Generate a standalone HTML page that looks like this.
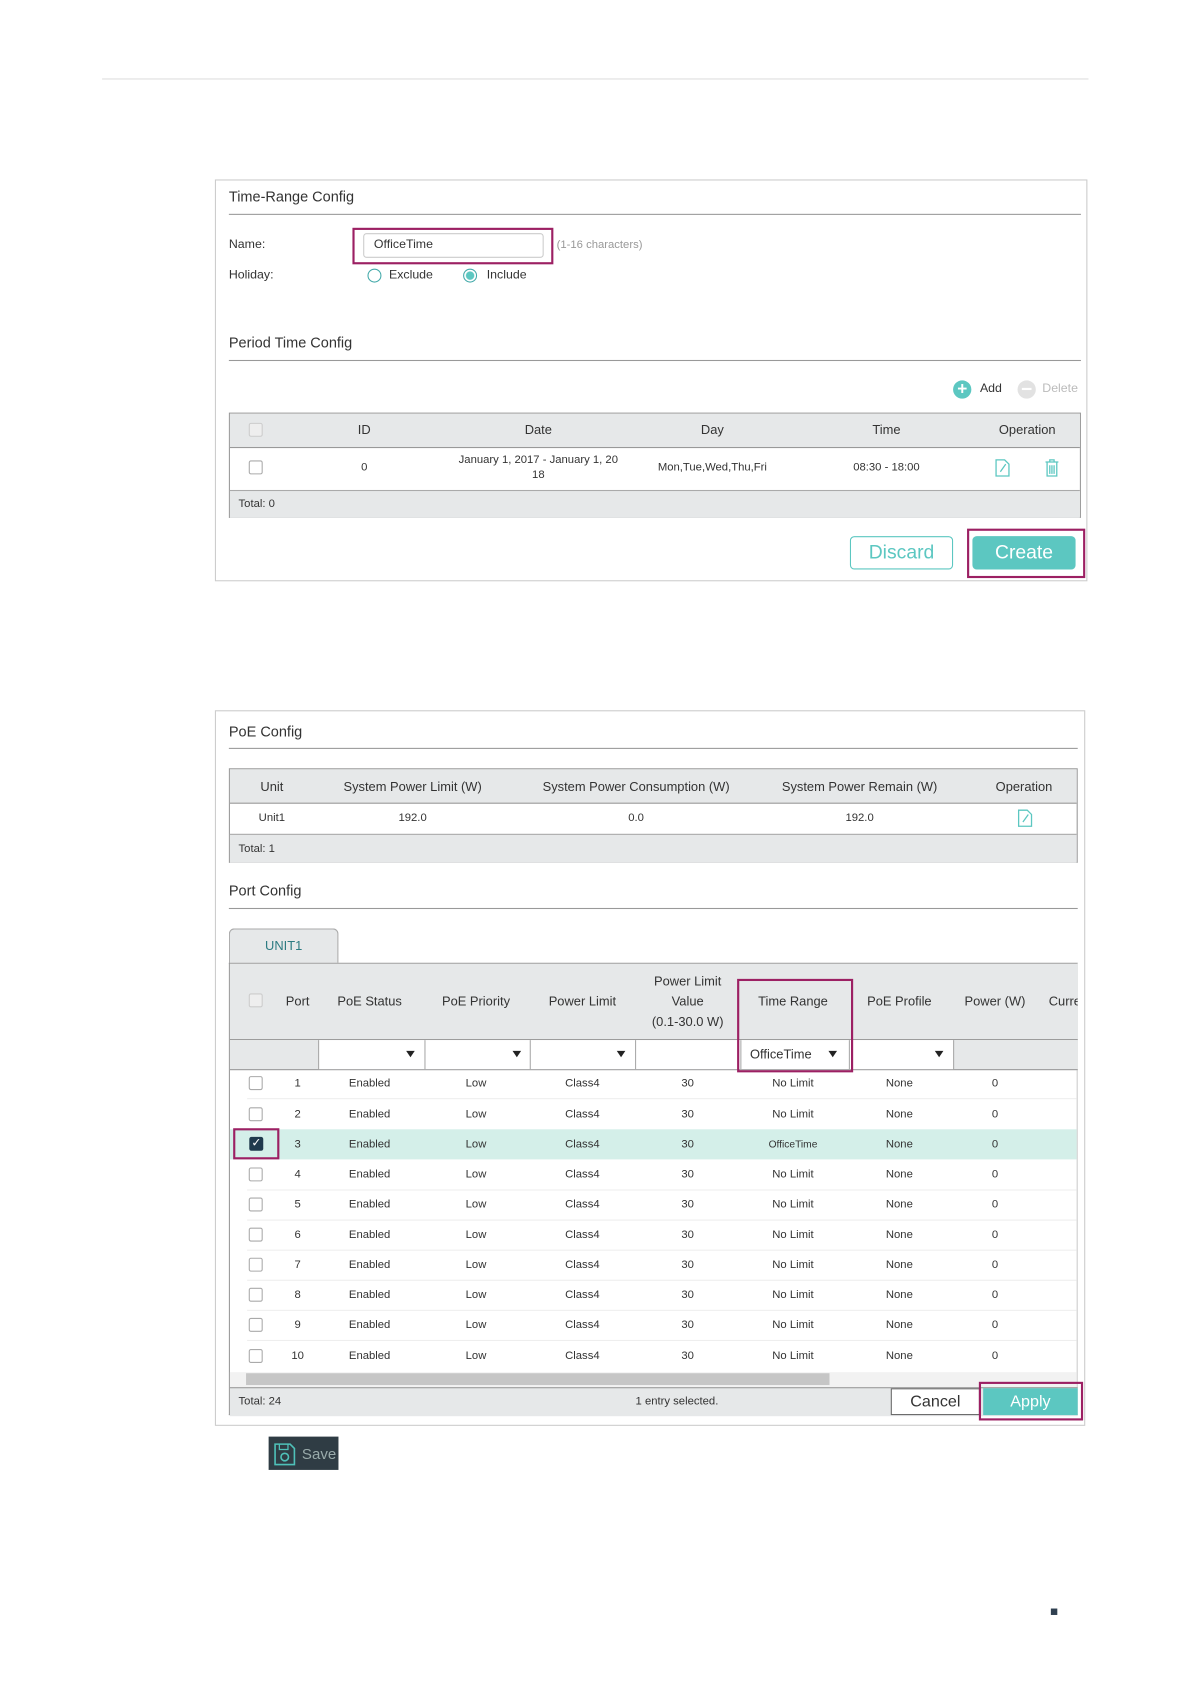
<!DOCTYPE html>
<html><head><meta charset="utf-8">
<style>
html,body{margin:0;padding:0;background:#fff;width:1191px;height:1684px;overflow:hidden}
#w{position:absolute;left:0;top:0;width:1110px;height:1570px;transform:scale(1.0745);transform-origin:0 0;font-family:"Liberation Sans",sans-serif;color:#333}
.a{position:absolute}
.t{position:absolute;white-space:nowrap;transform:translate(-50%,-50%);font-size:10.5px;color:#333}
.l{position:absolute;white-space:nowrap;transform:translateY(-50%);font-size:11.5px;color:#333}
.cb{position:absolute;width:11px;height:11px;border:1px solid #aaa;border-radius:2px;background:#fff;transform:translate(-50%,-50%)}
.mag{position:absolute;border:2px solid #9c2063;box-sizing:border-box}
.arr{position:absolute;width:0;height:0;border-left:4px solid transparent;border-right:4px solid transparent;border-top:6px solid #222}
</style></head><body><div id="w">
<div class="a" style="left:95px;top:73px;width:918px;height:1px;background:#ddd"></div>

<!-- Panel 1 -->
<div class="a" style="left:200px;top:167px;width:812px;height:374px;border:1px solid #ccc;box-sizing:border-box"></div>
<div class="l" style="left:213px;top:183px;font-size:13.5px">Time-Range Config</div>
<div class="a" style="left:213px;top:199px;width:793px;height:1px;background:#999"></div>
<div class="l" style="left:213px;top:228px">Name:</div>
<div class="a" style="left:338px;top:217px;width:168px;height:23px;border:1px solid #ccc;border-radius:3px;box-sizing:border-box"></div>
<div class="l" style="left:348px;top:228px">OfficeTime</div>
<div class="mag" style="left:328px;top:212px;width:187px;height:34px"></div>
<div class="l" style="left:518px;top:228px;color:#999;font-size:10.5px">(1-16 characters)</div>
<div class="l" style="left:213px;top:256px">Holiday:</div>
<div class="a" style="left:342px;top:250px;width:11px;height:11px;border:1px solid #4aa;border-radius:50%"></div>
<div class="l" style="left:362px;top:256px">Exclude</div>
<div class="a" style="left:431px;top:250px;width:11px;height:11px;border:1px solid #4aa;border-radius:50%;background:radial-gradient(#5cc7c1 45%,#fff 55%)"></div>
<div class="l" style="left:453px;top:256px">Include</div>
<div class="l" style="left:213px;top:319px;font-size:13.5px">Period Time Config</div>
<div class="a" style="left:213px;top:335px;width:793px;height:1px;background:#999"></div>
<div class="a" style="left:887px;top:354px;width:17px;height:17px;border-radius:50%;background:#5cc7c1;color:#fff;font-size:16px;line-height:17px;text-align:center;font-weight:bold">+</div>
<div class="l" style="left:912px;top:362px">Add</div>
<div class="a" style="left:947px;top:354px;width:17px;height:17px;border-radius:50%;background:#e2e2e2"></div>
<div class="a" style="left:951px;top:361px;width:9px;height:2px;background:#fff"></div>
<div class="l" style="left:970px;top:362px;color:#bbb">Delete</div>

<div class="a" style="left:213px;top:384px;width:793px;height:98px;border:1px solid #999;box-sizing:border-box;background:#fff"></div>
<div class="a" style="left:214px;top:385px;width:791px;height:31px;background:#e6e8e9;border-bottom:1px solid #999"></div>
<div class="a" style="left:214px;top:456px;width:791px;height:25px;background:#e6e8e9;border-top:1px solid #aaa"></div>
<div class="cb" style="left:238px;top:400px;border-color:#ccc;background:#eee"></div>
<div class="t" style="left:339px;top:400px;font-size:12px">ID</div>
<div class="t" style="left:501px;top:400px;font-size:12px">Date</div>
<div class="t" style="left:663px;top:400px;font-size:12px">Day</div>
<div class="t" style="left:825px;top:400px;font-size:12px">Time</div>
<div class="t" style="left:956px;top:400px;font-size:12px">Operation</div>
<div class="cb" style="left:238px;top:435px"></div>
<div class="t" style="left:339px;top:435px">0</div>
<div class="t" style="left:501px;top:428px">January 1, 2017 - January 1, 20</div>
<div class="t" style="left:501px;top:442px">18</div>
<div class="t" style="left:663px;top:435px">Mon,Tue,Wed,Thu,Fri</div>
<div class="t" style="left:825px;top:435px">08:30 - 18:00</div>
<svg class="a" style="left:926px;top:427px" width="14" height="17" viewBox="0 0 14 17"><path d="M1 1h8l4 4v11H1z M5 12l5-7" fill="none" stroke="#5cc7c1" stroke-width="1.2"/></svg>
<svg class="a" style="left:972px;top:427px" width="14" height="17" viewBox="0 0 14 17"><path d="M1 3h12M5 3V1h4v2M2.5 3v13h9V3M5 6v8M7 6v8M9 6v8" fill="none" stroke="#5cc7c1" stroke-width="1.2"/></svg>
<div class="l" style="left:222px;top:469px;font-size:10.5px">Total: 0</div>

<div class="a" style="left:791px;top:499px;width:96px;height:31px;border:1px solid #5cc7c1;border-radius:4px;box-sizing:border-box;color:#5cc7c1;font-size:18px;line-height:29px;text-align:center">Discard</div>
<div class="a" style="left:905px;top:499px;width:96px;height:31px;background:#5cc7c1;border-radius:4px;color:#fff;font-size:18px;line-height:31px;text-align:center">Create</div>
<div class="mag" style="left:900px;top:492px;width:110px;height:46px"></div>

<!-- Panel 2 -->
<div class="a" style="left:200px;top:661px;width:810px;height:666px;border:1px solid #ccc;box-sizing:border-box"></div>
<div class="l" style="left:213px;top:681px;font-size:13.5px">PoE Config</div>
<div class="a" style="left:213px;top:696px;width:790px;height:1px;background:#999"></div>
<div class="a" style="left:213px;top:715px;width:790px;height:88px;border:1px solid #999;box-sizing:border-box;background:#fff"></div>
<div class="a" style="left:214px;top:716px;width:788px;height:31px;background:#e6e8e9;border-bottom:1px solid #999"></div>
<div class="a" style="left:214px;top:776px;width:788px;height:26px;background:#e6e8e9;border-top:1px solid #aaa"></div>
<div class="t" style="left:253px;top:732px;font-size:12px">Unit</div>
<div class="t" style="left:384px;top:732px;font-size:12px">System Power Limit (W)</div>
<div class="t" style="left:592px;top:732px;font-size:12px">System Power Consumption (W)</div>
<div class="t" style="left:800px;top:732px;font-size:12px">System Power Remain (W)</div>
<div class="t" style="left:953px;top:732px;font-size:12px">Operation</div>
<div class="t" style="left:253px;top:761px">Unit1</div>
<div class="t" style="left:384px;top:761px">192.0</div>
<div class="t" style="left:592px;top:761px">0.0</div>
<div class="t" style="left:800px;top:761px">192.0</div>
<svg class="a" style="left:947px;top:753px" width="14" height="17" viewBox="0 0 14 17"><path d="M1 1h8l4 4v11H1z M5 12l5-7" fill="none" stroke="#5cc7c1" stroke-width="1.2"/></svg>
<div class="l" style="left:222px;top:790px;font-size:10.5px">Total: 1</div>
<div class="l" style="left:213px;top:829px;font-size:13.5px">Port Config</div>
<div class="a" style="left:213px;top:845px;width:790px;height:1px;background:#999"></div>

<div class="a" style="left:213px;top:864px;width:102px;height:33px;background:#e6e8e9;border:1px solid #aaa;border-bottom:none;border-radius:5px 5px 0 0;box-sizing:border-box"></div>
<div class="t" style="left:264px;top:880px;color:#2d7b82;font-size:12px">UNIT1</div>
<div class="a" style="left:213px;top:896px;width:790px;height:421px;border:1px solid #999;border-right:1px solid #ccc;box-sizing:border-box;background:#fff"></div>
<div class="a" style="left:214px;top:897px;width:789px;height:70px;background:#e6e8e9;border-bottom:1px solid #999"></div>
<div class="a" style="left:214px;top:968px;width:789px;height:27px;background:#e6e8e9;border-bottom:1px solid #999"></div>
<div class="a" style="left:297px;top:968px;width:590px;height:27px;background:#fff"></div>
<div class="a" style="left:395px;top:968px;width:1px;height:27px;background:#aaa"></div>
<div class="a" style="left:493px;top:968px;width:1px;height:27px;background:#aaa"></div>
<div class="a" style="left:591px;top:968px;width:1px;height:27px;background:#aaa"></div>
<div class="a" style="left:689px;top:968px;width:1px;height:27px;background:#aaa"></div>
<div class="a" style="left:790px;top:968px;width:1px;height:27px;background:#aaa"></div>
<div class="a" style="left:887px;top:968px;width:1px;height:27px;background:#aaa"></div>
<div class="a" style="left:296px;top:968px;width:1px;height:27px;background:#aaa"></div>
<div class="arr" style="left:378px;top:978px"></div>
<div class="arr" style="left:477px;top:978px"></div>
<div class="arr" style="left:574px;top:978px"></div>
<div class="arr" style="left:771px;top:978px"></div>
<div class="arr" style="left:870px;top:978px"></div>
<div class="l" style="left:698px;top:981px;font-size:12px">OfficeTime</div>
<div class="mag" style="left:686px;top:911px;width:108px;height:87px"></div>

<div class="cb" style="left:238px;top:931px;border-color:#ccc;background:#eee"></div>
<div class="t" style="left:277px;top:932px;font-size:12px">Port</div>
<div class="t" style="left:344px;top:932px;font-size:12px">PoE Status</div>
<div class="t" style="left:443px;top:932px;font-size:12px">PoE Priority</div>
<div class="t" style="left:542px;top:932px;font-size:12px">Power Limit</div>
<div class="t" style="left:640px;top:913px;font-size:12px">Power Limit</div>
<div class="t" style="left:640px;top:932px;font-size:12px">Value</div>
<div class="t" style="left:640px;top:951px;font-size:12px">(0.1-30.0 W)</div>
<div class="t" style="left:738px;top:932px;font-size:12px">Time Range</div>
<div class="t" style="left:837px;top:932px;font-size:12px">PoE Profile</div>
<div class="t" style="left:926px;top:932px;font-size:12px">Power (W)</div>
<div class="l" style="left:976px;top:932px;font-size:12px;width:27px;overflow:hidden">Current</div>

<div class="a" style="left:214px;top:1051px;width:788px;height:28px;background:#d4efe9"></div>
<div id="rows"></div>

<div class="a" style="left:214px;top:1277px;width:788px;height:14px;background:#f2f2f2"></div>
<div class="a" style="left:229px;top:1278px;width:543px;height:11px;background:#c6c6c6"></div>
<div class="a" style="left:214px;top:1291px;width:789px;height:26px;background:#e6e8e9;border-top:1px solid #999"></div>
<div class="l" style="left:222px;top:1304px;font-size:10.5px">Total: 24</div>
<div class="t" style="left:630px;top:1304px">1 entry selected.</div>
<div class="a" style="left:829px;top:1292px;width:83px;height:25px;background:#fff;border:1px solid #666;box-sizing:border-box;text-align:center;line-height:23px;font-size:15px">Cancel</div>
<div class="a" style="left:915px;top:1292px;width:88px;height:25px;background:#5cc7c1;color:#fff;text-align:center;line-height:25px;font-size:15px">Apply</div>
<div class="mag" style="left:911px;top:1286px;width:97px;height:36px"></div>
<div class="mag" style="left:217px;top:1050px;width:43px;height:29px"></div>

<div class="a" style="left:250px;top:1337px;width:65px;height:31px;background:#2f3c44"></div>
<svg class="a" style="left:254px;top:1342px" width="22" height="23" viewBox="0 0 22 23"><path d="M2 2h14l4 4v15H2z" fill="none" stroke="#4fc1b9" stroke-width="1.5"/><circle cx="11" cy="14" r="3.5" fill="none" stroke="#4fc1b9" stroke-width="1.5"/><path d="M6 2v5h8V2" fill="none" stroke="#4fc1b9" stroke-width="1.2"/></svg>
<div class="l" style="left:281px;top:1353px;font-size:14px;color:#9aa">Save</div>

<div class="a" style="left:978px;top:1497px;width:6px;height:6px;background:#2f4050"></div>
</div>
<script>
var ys=[1008,1037,1065,1093,1121,1149,1177,1205,1233,1262],h='';
for(var i=0;i<10;i++){var y=ys[i];
 if(i<9&&i!=1&&i!=2)h+='<div class="a" style="left:230px;top:'+(y+14)+'px;width:772px;height:1px;background:#eee"></div>';
 if(i==2)h+='<div class="a" style="left:232px;top:'+(y-7)+'px;width:13px;height:13px;background:#1f3a4d;border-radius:2px;color:#fff;font-size:11px;line-height:13px;text-align:center">&#10003;</div>';
 else h+='<div class="cb" style="left:238px;top:'+y+'px"></div>';
 var tr=i==2?'<span style="font-size:9.5px">OfficeTime</span>':'No Limit';
 var c=[[277,i+1],[344,'Enabled'],[443,'Low'],[542,'Class4'],[640,'30'],[738,tr],[837,'None'],[926,'0']];
 for(var j=0;j<c.length;j++)h+='<div class="t" style="left:'+c[j][0]+'px;top:'+y+'px">'+c[j][1]+'</div>';}
document.getElementById('rows').outerHTML=h;
</script>
</body></html>
